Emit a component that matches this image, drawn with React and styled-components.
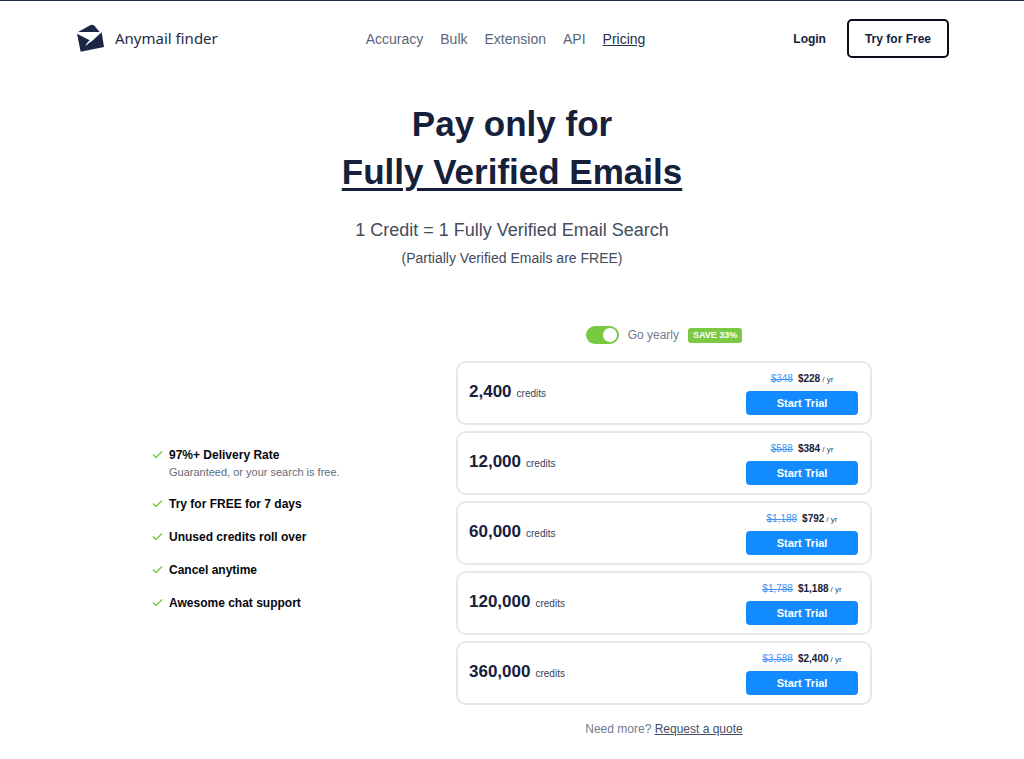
import React from 'react';
import styled, { createGlobalStyle } from 'styled-components';

const GlobalStyle = createGlobalStyle`
    * {
        box-sizing: border-box;
    }

    body {
        margin: 0;
        border-top: 1px solid #1f2d4f;
        background: #fff;
        color: #15203b;
        font-family: "Liberation Sans", Arial, sans-serif;
    }
`;

const Header = styled.header`
    display: flex;
    align-items: center;
    justify-content: space-between;
    padding: 18px 75px 0 77px;
`;

const Brand = styled.a`
    display: flex;
    align-items: center;
    gap: 11px;
    padding-bottom: 2px;
    color: #1f2b48;
    font-family: "Noto Sans", sans-serif;
    font-size: 15px;
    line-height: 20px;
    text-decoration: none;
`;

const Nav = styled.nav`
    display: flex;
    gap: 17px;
`;

const NavLink = styled.a`
    color: ${ props => props.$active ? '#232f4b' : '#5b6579' };
    font-size: 14px;
    line-height: 20px;
    text-decoration: ${ props => props.$active ? 'underline' : 'none' };
`;

const Actions = styled.div`
    display: flex;
    align-items: center;
    gap: 21px;
`;

const Login = styled.a`
    color: #15203b;
    font-size: 12px;
    font-weight: bold;
    text-decoration: none;
`;

const OutlineButton = styled.button`
    height: 39px;
    padding: 0 16px;
    border: 2px solid #0b0f1c;
    border-radius: 5px;
    background: #fff;
    color: #15203b;
    font-family: inherit;
    font-size: 12px;
    font-weight: bold;
    cursor: pointer;
`;

const Hero = styled.section`
    padding: 42px 16px 0;
    text-align: center;
`;

const Title = styled.h1`
    margin: 0;
    font-size: 35px;
    line-height: 48px;

    u {
        text-decoration-thickness: 3px;
        text-underline-offset: 4px;
    }
`;

const Lead = styled.p`
    margin: 20px 0 0;
    color: #434c5e;
    font-size: 18px;
    line-height: 28px;
`;

const Note = styled.p`
    margin: 4px 0 0;
    color: #434c5e;
    font-size: 14px;
    line-height: 20px;
`;

const Pricing = styled.main`
    display: grid;
    grid-template-columns: 1fr 416px;
    align-items: center;
    max-width: 720px;
    margin: 57px auto 0;
`;

const Features = styled.ul`
    display: flex;
    flex-direction: column;
    gap: 15px;
    margin: 0;
    padding: 0 0 6px;
    list-style: none;
`;

const Feature = styled.li`
    display: grid;
    grid-template-columns: 12px 1fr;
    column-gap: 5px;
`;

const Tick = styled.svg`
    width: 12px;
    height: 18px;
    fill: none;
    stroke: #7ac943;
    stroke-width: 1.5;
`;

const FeatureTitle = styled.strong`
    color: #05070d;
    font-size: 12px;
    line-height: 18px;
`;

const FeatureText = styled.span`
    grid-column: 2;
    color: #646b78;
    font-size: 11px;
    line-height: 16px;
`;

const Billing = styled.div`
    display: flex;
    align-items: center;
    justify-content: center;
    gap: 9px;
    height: 20px;
    margin-bottom: 16px;
`;

const BillingLabel = styled.label`
    display: flex;
    align-items: center;
    gap: 9px;
    color: #727c8f;
    font-size: 12px;
`;

const Toggle = styled.input`
    appearance: none;
    display: flex;
    align-items: center;
    justify-content: flex-start;
    width: 33px;
    height: 18px;
    margin: 0;
    padding: 2px;
    border-radius: 9px;
    background: #c5cad4;
    cursor: pointer;

    &:before {
        content: '';
        width: 14px;
        height: 14px;
        border-radius: 50%;
        background: #fff;
    }

    &:checked {
        justify-content: flex-end;
        background: #7ac943;
    }
`;

const Badge = styled.span`
    padding: 0 5px;
    border-radius: 3px;
    background: #7ac943;
    color: #fff;
    font-size: 9px;
    font-weight: bold;
    line-height: 15px;
`;

const Plans = styled.div`
    display: flex;
    flex-direction: column;
    gap: 6px;
`;

const Plan = styled.article`
    display: flex;
    align-items: center;
    justify-content: space-between;
    height: 64px;
    padding: 0 12px 0 11px;
    border: 2px solid #e6e8ef;
    border-radius: 10px;
`;

const Credits = styled.div`
    font-size: 10px;
    line-height: 24px;
    color: #353f57;
`;

const Amount = styled.strong`
    margin-right: 5px;
    color: #15203b;
    font-size: 17px;
`;

const Offer = styled.div`
    width: 112px;
    padding-bottom: 2px;
`;

const Prices = styled.div`
    display: flex;
    align-items: baseline;
    justify-content: center;
    font-size: 10px;
    line-height: 18px;
`;

const OldPrice = styled.s`
    margin-right: 5px;
    color: #3d95f5;
`;

const Period = styled.span`
    margin-left: 2px;
    color: #353f57;
    font-size: 8px;
`;

const TrialButton = styled.button`
    display: block;
    width: 100%;
    height: 24px;
    margin-top: 2px;
    padding: 0;
    border: 0;
    border-radius: 4px;
    background: #128bff;
    color: #fff;
    font-family: inherit;
    font-size: 11px;
    font-weight: bold;
    cursor: pointer;
`;

const Quote = styled.p`
    margin: 14px 0 0;
    color: #727c8f;
    font-size: 12px;
    line-height: 20px;
    text-align: center;
`;

const QuoteLink = styled.a`
    color: #454f63;
`;

const links = ['Accuracy', 'Bulk', 'Extension', 'API', 'Pricing'];

const features = [
    { title: '97%+ Delivery Rate', text: 'Guaranteed, or your search is free.' },
    { title: 'Try for FREE for 7 days' },
    { title: 'Unused credits roll over' },
    { title: 'Cancel anytime' },
    { title: 'Awesome chat support' },
];

const plans = [
    { credits: '2,400', oldPrice: '$348', price: '$228' },
    { credits: '12,000', oldPrice: '$588', price: '$384' },
    { credits: '60,000', oldPrice: '$1,188', price: '$792' },
    { credits: '120,000', oldPrice: '$1,788', price: '$1,188' },
    { credits: '360,000', oldPrice: '$3,588', price: '$2,400' },
];

const Logo = () => (
    <svg width="27" height="28" viewBox="0 0 81 84" aria-hidden="true">
        <path d="M3 24 L41 3 Q47 0 52 5 L68 24 Z" fill="#1a2644" />
        <path d="M0 29 L38 49 Q31 54 25 67 Q34 57 46 50 L74 25 L81 69 L11 83 Z" fill="#1a2644" />
    </svg>
);

const App = () => (
    <>
        <GlobalStyle />
        <Header>
            <Brand href="#">
                <Logo />
                Anymail finder
            </Brand>
            <Nav>
                { links.map(link => (
                    <NavLink key={ link } href="#" $active={ link === 'Pricing' }>
                        { link }
                    </NavLink>
                )) }
            </Nav>
            <Actions>
                <Login href="#">Login</Login>
                <OutlineButton>Try for Free</OutlineButton>
            </Actions>
        </Header>
        <Hero>
            <Title>
                Pay only for
                <br />
                <u>Fully Verified Emails</u>
            </Title>
            <Lead>1 Credit = 1 Fully Verified Email Search</Lead>
            <Note>(Partially Verified Emails are FREE)</Note>
        </Hero>
        <Pricing>
            <Features>
                { features.map(({ title, text }) => (
                    <Feature key={ title }>
                        <Tick viewBox="0 0 12 18" aria-hidden="true">
                            <path d="M1 8.5 L4 11.5 L10 5.5" />
                        </Tick>
                        <FeatureTitle>{ title }</FeatureTitle>
                        { text && <FeatureText>{ text }</FeatureText> }
                    </Feature>
                )) }
            </Features>
            <div>
                <Billing>
                    <BillingLabel htmlFor="yearly">
                        <Toggle id="yearly" type="checkbox" role="switch" defaultChecked />
                        Go yearly
                    </BillingLabel>
                    <Badge>SAVE 33%</Badge>
                </Billing>
                <Plans>
                    { plans.map(({ credits, oldPrice, price }) => (
                        <Plan key={ credits }>
                            <Credits>
                                <Amount>{ credits }</Amount>
                                credits
                            </Credits>
                            <Offer>
                                <Prices>
                                    <OldPrice>{ oldPrice }</OldPrice>
                                    <strong>{ price }</strong>
                                    <Period>/ yr</Period>
                                </Prices>
                                <TrialButton>Start Trial</TrialButton>
                            </Offer>
                        </Plan>
                    )) }
                </Plans>
                <Quote>
                    Need more? <QuoteLink href="#">Request a quote</QuoteLink>
                </Quote>
            </div>
        </Pricing>
    </>
);

export default App;
